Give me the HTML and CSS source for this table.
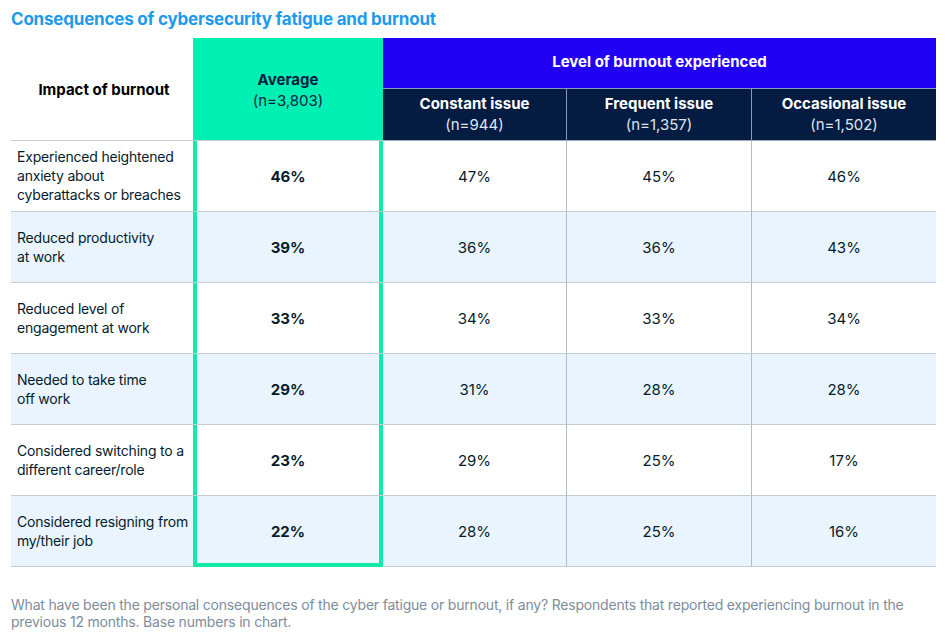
FILE: index.html
```html
<!DOCTYPE html>
<html>
<head>
<meta charset="utf-8">
<link rel="stylesheet" href="styles.css">
</head>
<body>
<h1 class="title">Consequences of cybersecurity fatigue and burnout</h1>
<table class="grid">
  <colgroup>
    <col class="c-label"><col class="c-avg"><col class="c-n"><col class="c-n"><col class="c-n">
  </colgroup>
  <thead>
    <tr>
      <th class="h-label" rowspan="2">Impact of burnout</th>
      <th class="h-avg" rowspan="2"><b>Average</b><span>(n=3,803)</span></th>
      <th class="h-level" colspan="3">Level of burnout experienced</th>
    </tr>
    <tr>
      <th class="h-sub"><b>Constant issue</b><span>(n=944)</span></th>
      <th class="h-sub sep"><b>Frequent issue</b><span>(n=1,357)</span></th>
      <th class="h-sub sep"><b>Occasional issue</b><span>(n=1,502)</span></th>
    </tr>
  </thead>
  <tbody>
    <tr>
      <td class="label">Experienced heightened<br>anxiety about<br>cyberattacks or breaches</td>
      <td class="avg">46%</td><td>47%</td><td class="sep">45%</td><td class="sep">46%</td>
    </tr>
    <tr class="alt">
      <td class="label">Reduced productivity<br>at work</td>
      <td class="avg">39%</td><td>36%</td><td class="sep">36%</td><td class="sep">43%</td>
    </tr>
    <tr>
      <td class="label">Reduced level of<br>engagement at work</td>
      <td class="avg">33%</td><td>34%</td><td class="sep">33%</td><td class="sep">34%</td>
    </tr>
    <tr class="alt">
      <td class="label">Needed to take time<br>off work</td>
      <td class="avg">29%</td><td>31%</td><td class="sep">28%</td><td class="sep">28%</td>
    </tr>
    <tr>
      <td class="label">Considered switching to a<br>different career/role</td>
      <td class="avg">23%</td><td>29%</td><td class="sep">25%</td><td class="sep">17%</td>
    </tr>
    <tr class="alt">
      <td class="label">Considered resigning from<br>my/their job</td>
      <td class="avg last">22%</td><td>28%</td><td class="sep">25%</td><td class="sep">16%</td>
    </tr>
  </tbody>
</table>
<p class="note">What have been the personal consequences of the cyber fatigue or burnout, if any? Respondents that reported experiencing burnout in the previous 12 months. Base numbers in chart.</p>
</body>
</html>
```
FILE: styles.css
```css
* { box-sizing: border-box; }
body {
  margin: 0;
  padding: 0 11px;
  background: #fff;
  font-family: Inter, "Liberation Sans", sans-serif;
  color: #051c2c;
}
.title {
  margin: 0;
  padding-top: 8px;
  height: 38px;
  font-size: 17px;
  line-height: 22px;
  font-weight: 700;
  color: #1d9bea;
  letter-spacing: -0.2px;
}
.grid {
  width: 925px;
  border-collapse: separate;
  border-spacing: 0;
  table-layout: fixed;
}
.c-label { width: 182px; }
.c-avg { width: 190px; }
.c-n:nth-child(3) { width: 183px; }
.c-n:nth-child(4) { width: 185px; }
.c-n:nth-child(5) { width: 185px; }
th {
  font-size: 15px;
  line-height: 21px;
  text-align: center;
  padding: 0;
}
th b { display: block; font-weight: 700; }
th span { display: block; font-weight: 400; }
.h-label {
  color: #000;
  font-weight: 700;
  border-bottom: 1px solid #c3cbd5;
  padding-left: 4px;
}
.h-avg {
  background: #00f0b4;
  color: #051c42;
  border-bottom: 1px solid #c3cbd5;
  padding-top: 2px;
}
.h-level {
  background: #2200f5;
  color: #fff;
  height: 51px;
  font-weight: 700;
  border-bottom: 1px solid #8a9cc0;
  padding-bottom: 3px;
}
.h-sub {
  background: #051c42;
  color: #fff;
  height: 52px;
  border-bottom: 1px solid #9eabbb;
  padding-bottom: 1px;
}
.h-sub span { color: #dfe5ee; }
.h-sub.sep { border-left: 1px solid #8b9aae; }
td {
  height: 71px;
  font-size: 15px;
  line-height: 19px;
  text-align: center;
  vertical-align: middle;
  border-bottom: 1px solid #c3cbd5;
  padding: 0;
}
td.sep { border-left: 1px solid #b3bdc9; }
td.label {
  text-align: left;
  font-size: 14px;
  letter-spacing: -0.2px;
  white-space: nowrap;
  padding: 0 0 1px 6px;
}
td.avg {
  font-weight: 700;
  box-shadow: inset 4px 0 0 #11eaa8, inset -4px 0 0 #11eaa8;
}
td.avg.last {
  border-bottom-color: #11eaa8;
  box-shadow: inset 4px 0 0 #11eaa8, inset -4px 0 0 #11eaa8, inset 0 -3px 0 #11eaa8;
}
tr.alt td { background: #e9f4fe; }
.note {
  margin: 29px 0 0;
  font-size: 14px;
  line-height: 17px;
  letter-spacing: -0.2px;
  color: #7d8d9d;
}
```
